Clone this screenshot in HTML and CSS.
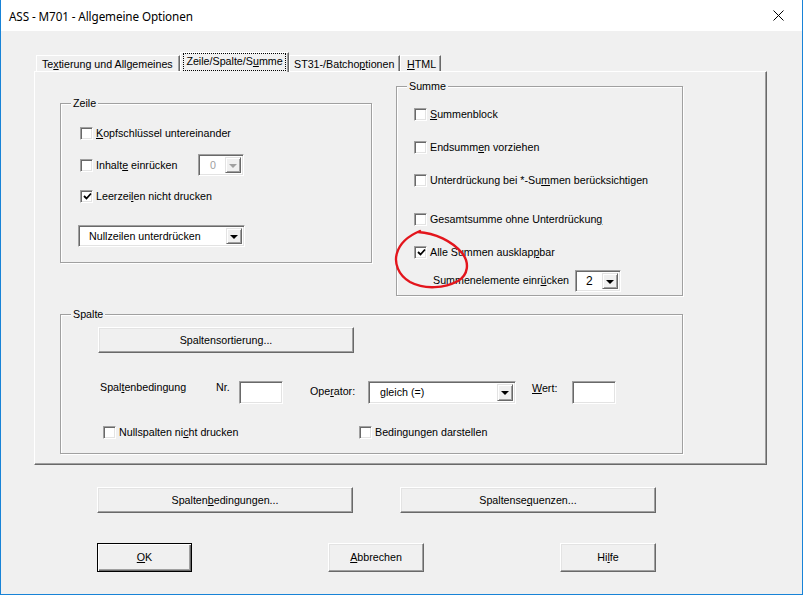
FILE: index.html
```html
<!DOCTYPE html>
<html lang="de">
<head>
<meta charset="utf-8">
<title>ASS - M701 - Allgemeine Optionen</title>
<link rel="stylesheet" href="styles.css">
</head>
<body>
<div class="window">
  <div class="titlebar">
    <span class="title">ASS - M701 - Allgemeine Optionen</span>
    <svg class="close" width="11" height="11" viewBox="0 0 11 11"><path d="M0.5 0.5 L10.5 10.5 M10.5 0.5 L0.5 10.5" stroke="#000" stroke-width="1" fill="none"/></svg>
  </div>
  <div class="client">
    <div class="tabs">
      <div class="tab t1">Te<u>x</u>tierung und Allgemeines</div>
      <div class="tab sel"><span class="focus">Zeile/Spalte/S<u>u</u>mme</span></div>
      <div class="tab t3">ST31-/Batcho<u>p</u>tionen</div>
      <div class="tab t4"><u>H</u>TML</div>
    </div>
    <div class="panel">
      <div class="toprow">
        <div class="group zeile">
          <span class="glabel">Zeile</span>
          <div class="row z1"><span class="cb"></span><span><u>K</u>opfschlüssel untereinander</span></div>
          <div class="row z2">
            <div class="chk"><span class="cb"></span><span>Inhalt<u>e</u> einrücken</span></div>
            <div class="combo disabled w46"><span class="ctext">0</span><span class="cbtn"><span class="tri"></span></span></div>
          </div>
          <div class="row z3"><span class="cb checked"><svg width="9" height="9" viewBox="0 0 9 9"><path d="M1 4 L3.5 6.5 L8 1.5" stroke="#000" stroke-width="1.8" fill="none"/></svg></span><span>Leerzei<u>l</u>en nicht drucken</span></div>
          <div class="row z4">
            <div class="combo w167"><span class="ctext">Nullzeilen unterdrücken</span><span class="cbtn"><span class="tri"></span></span></div>
          </div>
        </div>
        <div class="group summe">
          <span class="glabel">Summe</span>
          <div class="row s1"><span class="cb"></span><span><u>S</u>ummenblock</span></div>
          <div class="row s2"><span class="cb"></span><span>Endsumm<u>e</u>n vorziehen</span></div>
          <div class="row s2"><span class="cb"></span><span>Unterdrückung bei *-Su<u>m</u>men berücksichtigen</span></div>
          <div class="row s4"><span class="cb"></span><span>Gesamtsumme ohne Unterdrückun<u>g</u></span></div>
          <div class="row s2"><span class="cb checked"><svg width="9" height="9" viewBox="0 0 9 9"><path d="M1 4 L3.5 6.5 L8 1.5" stroke="#000" stroke-width="1.8" fill="none"/></svg></span><span>Alle Summen ausklap<u>p</u>bar</span></div>
          <div class="row s6">
            <span class="slabel">Summenelemente einr<u>ü</u>cken</span>
            <div class="combo w46"><span class="ctext big">2</span><span class="cbtn"><span class="tri"></span></span></div>
          </div>
        </div>
      </div>
      <div class="group spalte">
        <span class="glabel">Spalte</span>
        <div class="row p1"><button class="btn sort">Spaltensortierung...</button></div>
        <div class="row p2">
          <span class="lbl l-bed">Spal<u>t</u>enbedingung</span>
          <span class="lbl l-nr">Nr.</span>
          <span class="edit"></span>
          <span class="lbl l-op">Ope<u>r</u>ator:</span>
          <div class="combo w148 h23"><span class="ctext op">gleich (=)</span><span class="cbtn"><span class="tri"></span></span></div>
          <span class="lbl l-wert"><u>W</u>ert:</span>
          <span class="edit"></span>
        </div>
        <div class="row p3">
          <div class="chk c-null"><span class="cb"></span><span>Nullspalten ni<u>c</u>ht drucken</span></div>
          <div class="chk"><span class="cb"></span><span>Bedingun<u>g</u>en darstellen</span></div>
        </div>
      </div>
    </div>
    <div class="btnrow r1">
      <button class="btn wide">Spalten<u>b</u>edingungen...</button>
      <button class="btn wide">Spaltense<u>q</u>uenzen...</button>
    </div>
    <div class="btnrow r2">
      <button class="btn tall default"><u>O</u>K</button>
      <button class="btn tall"><u>A</u>bbrechen</button>
      <button class="btn tall">Hi<u>l</u>fe</button>
    </div>
  </div>
  <svg class="annot" width="100" height="66" viewBox="0 0 100 66"><path d="M28 5 C45 6, 62 14, 72 26 C80 36, 78 48, 68 54 C55 61, 35 63, 20 55 C8 48, 4 36, 7 26 C10 16, 18 9, 30 4" stroke="#e3151c" stroke-width="2.4" fill="none" stroke-linecap="round"/></svg>
</div>
</body>
</html>
```
FILE: styles.css
```css
html, body {
  margin: 0;
  padding: 0;
  background: #f0f0f0;
}
body {
  font-family: "Liberation Sans", Arial, sans-serif;
  font-size: 10.7px;
  line-height: 13px;
  color: #000;
}
u { text-decoration: underline; text-underline-offset: 1px; }

.window {
  position: relative;
  width: 803px;
  height: 595px;
  box-sizing: border-box;
  border-left: 1px solid #1883d7;
  border-right: 1px solid #1883d7;
  border-bottom: 1px solid #1883d7;
  overflow: hidden;
}
.titlebar {
  height: 31px;
  background: #fff;
  display: flex;
  align-items: center;
  justify-content: space-between;
  padding: 0 18px 0 8px;
}
.title {
  font-family: "Noto Sans", "Open Sans", sans-serif;
  font-size: 11.7px;
  letter-spacing: -0.1px;
  margin-top: 1px;
}
.close { display: block; }

.client {
  height: 563px;
  background: #f0f0f0;
  padding: 21px 0 0 33px;
  box-sizing: border-box;
}

/* tabs */
.tabs {
  display: flex;
  align-items: flex-end;
  height: 19px;
  margin-left: 2px;
  position: relative;
  z-index: 1;
}
.tab {
  box-sizing: border-box;
  height: 16px;
  border-top: 1px solid #fff;
  border-left: 1px solid #fff;
  border-right: 1px solid #696969;
  box-shadow: inset -1px 0 0 #a0a0a0;
  background: #f0f0f0;
  padding: 2px 0 0 5px;
  white-space: nowrap;
}
.t1 { width: 144px; }
.t3 { width: 111px; padding-left: 4px; }
.t4 { width: 41px; padding-left: 6px; }
.tab.sel {
  width: 109px;
  height: 20px;
  margin-bottom: -1px;
  padding: 0 2px 1px 2px;
  display: flex;
}
.focus {
  flex: 1;
  outline: 1px dotted #000;
  outline-offset: -1px;
  text-align: center;
  padding-top: 2px;
}

/* panel */
.panel {
  width: 733px;
  height: 394px;
  box-sizing: border-box;
  border-top: 1px solid #fff;
  border-left: 1px solid #fff;
  border-right: 1px solid #696969;
  border-bottom: 1px solid #696969;
  box-shadow: inset -1px -1px 0 #a0a0a0;
  padding: 14px 0 0 25px;
}
.toprow {
  display: flex;
  align-items: flex-start;
}

.group {
  position: relative;
  box-sizing: border-box;
  border: 1px solid #a0a0a0;
  box-shadow: inset 1px 1px 0 #fff, 1px 1px 0 #fff;
}
.glabel {
  position: absolute;
  top: -7px;
  left: 10px;
  background: #f0f0f0;
  padding: 0 2px;
}
.zeile {
  width: 312px;
  height: 160px;
  margin-top: 17px;
  padding-left: 19px;
}
.summe {
  width: 287px;
  height: 210px;
  margin-left: 24px;
  padding-left: 17px;
}
.spalte {
  width: 623px;
  height: 140px;
  margin-top: 18px;
}

.row {
  display: flex;
  align-items: center;
}
.chk {
  display: flex;
  align-items: center;
}
.cb {
  width: 13px;
  height: 13px;
  box-sizing: border-box;
  background: #fff;
  border: 1px solid;
  border-color: #a0a0a0 #fff #fff #a0a0a0;
  box-shadow: inset 1px 1px 0 #696969, inset -1px -1px 0 #e3e3e3;
  margin-right: 3px;
  display: flex;
  align-items: center;
  justify-content: center;
  flex: none;
}
.cb svg { display: block; margin: 0 0 0 1px; }

/* zeile rows */
.z1 { margin-top: 23px; height: 13px; }
.z2 { margin-top: 14px; height: 22px; width: 164px; justify-content: space-between; }
.z3 { margin-top: 14px; height: 13px; }
.z4 { margin-top: 22px; margin-left: -2px; }

/* summe rows */
.s1 { margin-top: 21px; height: 13px; }
.s2 { margin-top: 20px; height: 13px; }
.s4 { margin-top: 26px; height: 13px; }
.s6 { margin-top: 11px; padding-left: 19px; }
.slabel { width: 142px; margin-top: -2px; }

/* combos */
.combo {
  box-sizing: border-box;
  height: 22px;
  display: flex;
  align-items: stretch;
  background: #fff;
  border: 1px solid;
  border-color: #a0a0a0 #fff #fff #a0a0a0;
  box-shadow: inset 1px 1px 0 #696969, inset -1px -1px 0 #e3e3e3;
  padding: 2px;
}
.w46 { width: 46px; }
.w167 { width: 167px; }
.w148 { width: 148px; }
.h23 { height: 23px; }
.ctext {
  flex: 1;
  padding-left: 8px;
  display: flex;
  align-items: center;
  white-space: nowrap;
}
.ctext.big { font-size: 12px; padding-left: 8px; }
.ctext.op { padding-left: 9px; }
.combo.disabled .ctext { color: #a0a0a0; padding-left: 9px; }
.cbtn {
  width: 16px;
  box-sizing: border-box;
  background: #f0f0f0;
  border: 1px solid;
  border-color: #e3e3e3 #696969 #696969 #e3e3e3;
  box-shadow: inset 1px 1px 0 #fff, inset -1px -1px 0 #a0a0a0;
  display: flex;
  align-items: center;
  justify-content: center;
}
.tri {
  width: 0;
  height: 0;
  border-left: 4px solid transparent;
  border-right: 4px solid transparent;
  border-top: 4px solid #000;
  margin-top: 1px;
}
.combo.disabled .tri { border-top-color: #a0a0a0; }

/* spalte */
.p1 { margin-top: 12px; padding-left: 37px; }
.p2 {
  margin-top: 28px;
  padding-left: 39px;
  height: 23px;
  align-items: flex-start;
}
.lbl { white-space: nowrap; }
.l-bed { width: 116px; }
.l-nr { width: 23px; }
.l-op { width: 58px; margin-left: 27px; margin-top: 4px; }
.l-wert { width: 40px; margin-left: 16px; margin-top: 1px; }
.edit {
  width: 44px;
  height: 23px;
  box-sizing: border-box;
  background: #fff;
  border: 1px solid;
  border-color: #a0a0a0 #fff #fff #a0a0a0;
  box-shadow: inset 1px 1px 0 #696969, inset -1px -1px 0 #e3e3e3;
}
.p3 { margin-top: 22px; padding-left: 42px; height: 13px; }
.c-null { width: 256px; }

/* buttons */
.btn {
  font-family: inherit;
  font-size: 10.7px;
  line-height: 13px;
  color: #000;
  box-sizing: border-box;
  background: #f0f0f0;
  border: 1px solid;
  border-color: #fff #696969 #696969 #fff;
  box-shadow: inset -1px -1px 0 #a0a0a0, inset 1px 1px 0 #e3e3e3;
  padding: 0;
  margin: 0;
  height: 26px;
}
.btn.sort { width: 256px; }
.btn.wide { width: 256px; }
.btn.tall { width: 96px; height: 29px; }
.btn.default {
  width: 95px;
  border: 1px solid #000;
  box-shadow: inset 1px 1px 0 #fff, inset -1px -1px 0 #696969, inset -2px -2px 0 #a0a0a0;
}
.btnrow {
  display: flex;
  margin-left: 63px;
}
.btnrow.r1 { margin-top: 22px; gap: 47px; }
.btnrow.r2 { margin-top: 30px; gap: 136px; }

.annot {
  position: absolute;
  left: 389px;
  top: 227px;
}
```
